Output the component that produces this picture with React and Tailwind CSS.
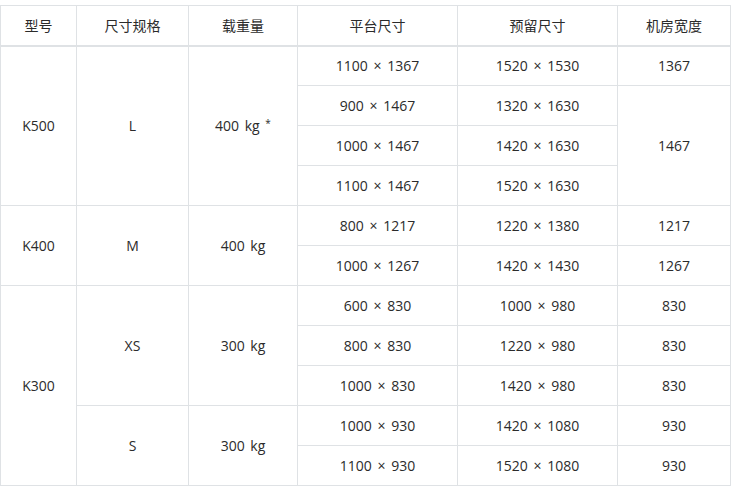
import React from "react";

const td = "border border-[#dfe2e5] text-center align-middle h-[40px] p-0";

export default function App() {
  return (
    <div className="w-[733px] h-[491px] bg-white pt-[5px]" style={{ fontFamily: '"Open Sans", "Noto Sans CJK SC", sans-serif' }}>
      <table className="border-collapse table-fixed w-[730px] text-[14px] text-[#2b2b2b] [word-spacing:2px]">
        <colgroup>
          <col className="w-[76px]" />
          <col className="w-[112px]" />
          <col className="w-[109px]" />
          <col className="w-[160px]" />
          <col className="w-[160px]" />
          <col className="w-[113px]" />
        </colgroup>
        <thead>
          <tr className="h-[40px]">
            {["型号", "尺寸规格", "载重量", "平台尺寸", "预留尺寸", "机房宽度"].map((h) => (
              <th key={h} className="border border-[#dfe2e5] border-b-2 font-normal text-center h-[40px] p-0">{h}</th>
            ))}
          </tr>
        </thead>
        <tbody>
          <tr>
            <td rowSpan={4} className={td}>K500</td>
            <td rowSpan={4} className={td}>L</td>
            <td rowSpan={4} className={td}>400 kg <sup className="text-[10px] relative -top-[4px]">*</sup></td>
            <td className={td}>1100 × 1367</td>
            <td className={td}>1520 × 1530</td>
            <td className={td}>1367</td>
          </tr>
          <tr>
            <td className={td}>900 × 1467</td>
            <td className={td}>1320 × 1630</td>
            <td rowSpan={3} className={td}>1467</td>
          </tr>
          <tr>
            <td className={td}>1000 × 1467</td>
            <td className={td}>1420 × 1630</td>
          </tr>
          <tr>
            <td className={td}>1100 × 1467</td>
            <td className={td}>1520 × 1630</td>
          </tr>
          <tr>
            <td rowSpan={2} className={td}>K400</td>
            <td rowSpan={2} className={td}>M</td>
            <td rowSpan={2} className={td}>400 kg</td>
            <td className={td}>800 × 1217</td>
            <td className={td}>1220 × 1380</td>
            <td className={td}>1217</td>
          </tr>
          <tr>
            <td className={td}>1000 × 1267</td>
            <td className={td}>1420 × 1430</td>
            <td className={td}>1267</td>
          </tr>
          <tr>
            <td rowSpan={5} className={td}>K300</td>
            <td rowSpan={3} className={td}>XS</td>
            <td rowSpan={3} className={td}>300 kg</td>
            <td className={td}>600 × 830</td>
            <td className={td}>1000 × 980</td>
            <td className={td}>830</td>
          </tr>
          <tr>
            <td className={td}>800 × 830</td>
            <td className={td}>1220 × 980</td>
            <td className={td}>830</td>
          </tr>
          <tr>
            <td className={td}>1000 × 830</td>
            <td className={td}>1420 × 980</td>
            <td className={td}>830</td>
          </tr>
          <tr>
            <td rowSpan={2} className={td}>S</td>
            <td rowSpan={2} className={td}>300 kg</td>
            <td className={td}>1000 × 930</td>
            <td className={td}>1420 × 1080</td>
            <td className={td}>930</td>
          </tr>
          <tr>
            <td className={td}>1100 × 930</td>
            <td className={td}>1520 × 1080</td>
            <td className={td}>930</td>
          </tr>
        </tbody>
      </table>
    </div>
  );
}
